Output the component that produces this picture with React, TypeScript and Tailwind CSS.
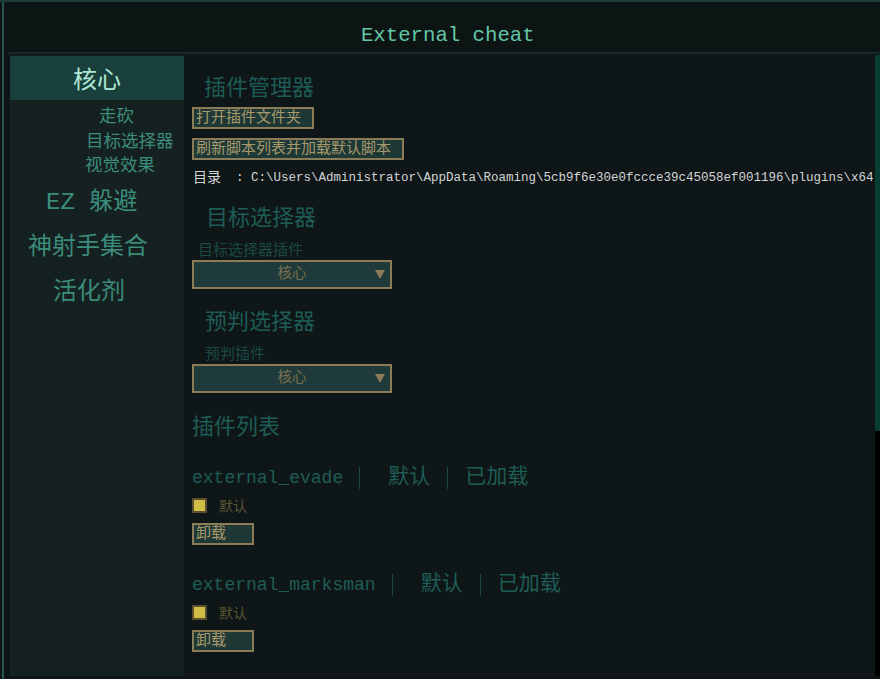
const mono = { fontFamily: '"Liberation Mono", "Noto Sans CJK SC", monospace' };

const sideSubs = ["走砍", "目标选择器", "视觉效果"];

function Heading({ children, indent }: { children: string; indent: string }) {
  return (
    <div className={`h-[24px] pt-[4px] leading-[20px] text-[22px] text-[#1e5d55] ${indent}`}>{children}</div>
  );
}

function TanButton({ label, className = "" }: { label: string; className?: string }) {
  return (
    <div
      className={`h-[22px] border-2 border-[#8b7b56] bg-[#1e3836] px-[2px] pt-[1px] text-[15px] leading-[17px] text-[#a8986c] whitespace-nowrap ${className}`}
    >
      {label}
    </div>
  );
}

function Select({ value }: { value: string }) {
  return (
    <div className="relative w-[200px] h-[29px] border-2 border-[#8b7b56] bg-[#1e3a3a] flex items-center justify-center">
      <span className="text-[14.5px] text-[#7a7050]">{value}</span>
      <svg className="absolute right-[5px] top-[8px]" width="10" height="9" viewBox="0 0 10 9">
        <path d="M0 0 H10 L5 9 Z" fill="#8b7b56" />
      </svg>
    </div>
  );
}

function Plugin({ name, top }: { name: string; top: string }) {
  return (
    <div className={top}>
      <div className="h-[24px] flex items-center text-[#1e5d55] whitespace-nowrap">
        <span className="text-[18px]">{name}</span>
        <span className="mx-[16px] w-px h-[22px] bg-[#1e4a44]" />
        <span className="text-[21px] ml-[12px]">默认</span>
        <span className="mx-[17px] w-px h-[22px] bg-[#1e4a44]" />
        <span className="text-[21px]">已加载</span>
      </div>
      <div className="mt-[8px] h-[15px] flex items-center">
        <span className="w-[15px] h-[15px] border-2 border-[#5a5030] bg-[#d0bd45]" />
        <span className="ml-[12px] pt-[3px] text-[14px] text-[#5b5530]">默认</span>
      </div>
      <TanButton label="卸载" className="mt-[10px] w-[62px]" />
    </div>
  );
}

export default function App() {
  return (
    <div className="w-[880px] h-[679px] bg-[#0d1414] flex flex-col overflow-hidden" style={mono}>
      <div className="h-[2px] bg-[#1f3b36] shrink-0" />
      <div className="flex-1 flex pl-[2px]">
        <div className="flex-1 flex flex-col border-l-2 border-[#24514a]">
          {/* Title */}
          <div className="h-[50px] shrink-0 flex items-center justify-center pt-[18px]">
            <span className="text-[20.7px] text-[#63c6a6]">External cheat</span>
          </div>
          <div className="h-[2px] bg-[#162a27] ml-[4px] shrink-0" />

          <div className="flex-1 flex pl-[6px] pt-[1px] pb-[3px]">
            {/* Sidebar */}
            <div className="w-[174px] bg-[#152021] pt-[1px]">
              <div className="h-[44px] bg-[#1a403d] flex items-center justify-center pt-[7px] text-[24px] text-[#aee8d4]">
                核心
              </div>
              <div className="text-[17.5px] text-[#3b8c7a] leading-[24.5px] mt-[5px]">
                <div className="pl-[89px]">{sideSubs[0]}</div>
                <div className="pl-[76px]">{sideSubs[1]}</div>
                <div className="pl-[75px]">{sideSubs[2]}</div>
              </div>
              <div className="text-[24px] text-[#3b8c7a] leading-[45px] mt-[1px]">
                <div className="pl-[36px] whitespace-pre">EZ 躲避</div>
                <div className="pl-[18px]">神射手集合</div>
                <div className="pl-[43px]">活化剂</div>
              </div>
            </div>

            {/* Main */}
            <div className="flex-1 bg-[#0e1618] pl-[8px] pt-[21px] overflow-hidden whitespace-nowrap">
              <Heading indent="pl-[12px]">插件管理器</Heading>
              <TanButton label="打开插件文件夹" className="mt-[7px] w-[122px]" />
              <TanButton label="刷新脚本列表并加载默认脚本" className="mt-[9px] w-[212px]" />
              <div className="mt-[10px] h-[16px] flex items-center text-[#d4d4d4] pl-[1px]">
                <span className="text-[14px]">目录</span>
                <span className="text-[12.5px] whitespace-pre">  : C:\Users\Administrator\AppData\Roaming\5cb9f6e30e0fccce39c45058ef001196\plugins\x64</span>
              </div>

              <div className="mt-[20px]">
                <Heading indent="pl-[14px]">目标选择器</Heading>
              </div>
              <div className="mt-[15px] h-[14px] leading-[14px] text-[15px] text-[#1b4a44] pl-[6px]">目标选择器插件</div>
              <div className="mt-[1px]">
                <Select value="核心" />
              </div>

              <div className="mt-[21px]">
                <Heading indent="pl-[13px]">预判选择器</Heading>
              </div>
              <div className="mt-[15px] h-[14px] leading-[14px] text-[15px] text-[#1b4a44] pl-[13px]">预判插件</div>
              <div className="mt-[1px]">
                <Select value="核心" />
              </div>

              <div className="mt-[22px]">
                <Heading indent="pl-0">插件列表</Heading>
              </div>

              <Plugin name="external_evade" top="mt-[27px]" />
              <Plugin name="external_marksman" top="mt-[28px]" />
            </div>

            {/* Scrollbar */}
            <div className="w-[9px] bg-[#0e1618] pl-[1px] flex flex-col">
              <div className="h-[376px] bg-[#073d33]" />
              <div className="flex-1 bg-black" />
            </div>
            <div className="w-[9px] bg-[#0f1a1a]" />
          </div>
        </div>
      </div>
    </div>
  );
}
